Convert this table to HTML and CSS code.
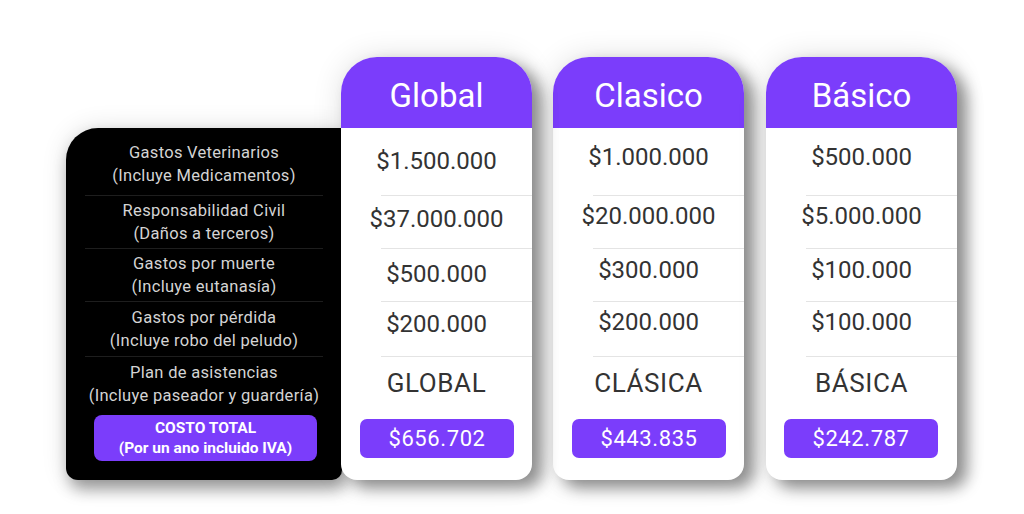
FILE: index.html
```
<!DOCTYPE html>
<html lang="es">
<head>
<meta charset="utf-8">
<title>Planes</title>
<link rel="stylesheet" href="styles.css">
</head>
<body>
<div class="board">
  <div class="features">
    <div class="frow frow--1">Gastos Veterinarios<br>(Incluye Medicamentos)</div>
    <div class="frow frow--2">Responsabilidad Civil<br>(Daños a terceros)</div>
    <div class="frow frow--3">Gastos por muerte<br>(Incluye eutanasía)</div>
    <div class="frow frow--4">Gastos por pérdida<br>(Incluye robo del peludo)</div>
    <div class="frow frow--5">Plan de asistencias<br>(Incluye paseador y guardería)</div>
    <div class="total-label">COSTO TOTAL<br>(Por un ano incluido IVA)</div>
  </div>

  <div class="plan plan--global">
    <div class="plan-head">Global</div>
    <div class="prow prow--1">$1.500.000</div>
    <div class="prow prow--2">$37.000.000</div>
    <div class="prow prow--3">$500.000</div>
    <div class="prow prow--4">$200.000</div>
    <div class="prow prow--5 prow--name">GLOBAL</div>
    <div class="price">$656.702</div>
  </div>

  <div class="plan">
    <div class="plan-head">Clasico</div>
    <div class="prow prow--1">$1.000.000</div>
    <div class="prow prow--2">$20.000.000</div>
    <div class="prow prow--3">$300.000</div>
    <div class="prow prow--4">$200.000</div>
    <div class="prow prow--5 prow--name">CLÁSICA</div>
    <div class="price">$443.835</div>
  </div>

  <div class="plan plan--basic">
    <div class="plan-head">Básico</div>
    <div class="prow prow--1">$500.000</div>
    <div class="prow prow--2">$5.000.000</div>
    <div class="prow prow--3">$100.000</div>
    <div class="prow prow--4">$100.000</div>
    <div class="prow prow--5 prow--name">BÁSICA</div>
    <div class="price">$242.787</div>
  </div>
</div>
</body>
</html>
```

FILE: styles.css
```
* { box-sizing: border-box; }

html, body {
  margin: 0;
  padding: 0;
  background: #ffffff;
}

body {
  width: 1024px;
  height: 514px;
  overflow: hidden;
  font-family: Roboto, "Liberation Sans", sans-serif;
}

.board {
  display: flex;
  align-items: flex-start;
  padding: 57px 0 0 66px;
}

/* ---------- left feature panel ---------- */
.features {
  width: 276px;
  margin-top: 71px;
  height: 352px;
  background: #000;
  border-radius: 32px 0 10px 12px;
  padding: 0 17px 19px 17px;
  display: flex;
  flex-direction: column;
  box-shadow: 4px 9px 16px rgba(0, 0, 0, 0.38), 0 0 26px rgba(0, 0, 0, 0.12);
  color: #d4d4d4;
  font-size: 16.5px;
  font-weight: 400;
  line-height: 23px;
  text-align: center;
}

.frow {
  display: flex;
  align-items: center;
  justify-content: center;
  border-bottom: 1px solid #1e1e1e;
  margin: 0 2px;
  letter-spacing: 0.3px;
  white-space: nowrap;
}
.frow--1 { height: 68px; padding-top: 5px; }
.frow--2 { height: 53px; }
.frow--3 { height: 53px; }
.frow--4 { height: 55px; }
.frow--5 { height: 52px; border-bottom: 0; padding-top: 1px; }

.total-label {
  margin: 6px 8px 0 11px;
  height: 46px;
  border-radius: 8px;
  background: #7b3dfb;
  color: #fff;
  font-weight: 700;
  font-size: 15.5px;
  line-height: 20px;
  display: flex;
  align-items: center;
  justify-content: center;
  letter-spacing: 0;
  white-space: nowrap;
}

/* ---------- plan cards ---------- */
.plan {
  position: relative;
  width: 191px;
  height: 423px;
  margin-left: 21px;
  background: #fff;
  border-radius: 36px 36px 16px 16px;
  display: flex;
  flex-direction: column;
  box-shadow: 10px 8px 15px rgba(0, 0, 0, 0.42), 0 0 30px rgba(0, 0, 0, 0.12);
  color: #333;
}

.plan--global {
  margin-left: -1px;
  z-index: 1;
}

.plan--basic { margin-left: 22px; }

.plan-head {
  height: 71px;
  background: #7b3dfb;
  border-radius: 36px 36px 0 0;
  color: #fff;
  font-size: 33px;
  font-weight: 400;
  display: flex;
  align-items: center;
  justify-content: center;
  padding-top: 5px;
}

.prow {
  display: flex;
  align-items: center;
  justify-content: center;
  font-size: 24px;
  background: linear-gradient(#e4e4e4, #e4e4e4) no-repeat left 40px bottom / calc(100% - 40px) 1px;
}
.prow--1 { height: 68px; padding-bottom: 10px; }
.prow--2 { height: 53px; padding-bottom: 14px; }
.prow--3 { height: 53px; padding-bottom: 12px; }
.prow--4 { height: 55px; padding-bottom: 16px; }
.prow--5 { height: 51px; background: none; }

.plan--global .prow--1 { padding-bottom: 2px; }
.plan--global .prow--2 { padding-bottom: 8px; }
.plan--global .prow--3 { padding-bottom: 4px; }
.plan--global .prow--4 { padding-bottom: 12px; }

.prow--name {
  font-size: 26px;
  letter-spacing: 0.6px;
  padding-top: 1px;
}

.price {
  margin: 11px 18px 0 19px;
  height: 39px;
  border-radius: 7px;
  background: #7b3dfb;
  color: #fff;
  font-size: 22px;
  font-weight: 400;
  letter-spacing: 0.6px;
  display: flex;
  align-items: center;
  justify-content: center;
}
.plan--basic .price { margin-left: 18px; margin-right: 19px; }
```
